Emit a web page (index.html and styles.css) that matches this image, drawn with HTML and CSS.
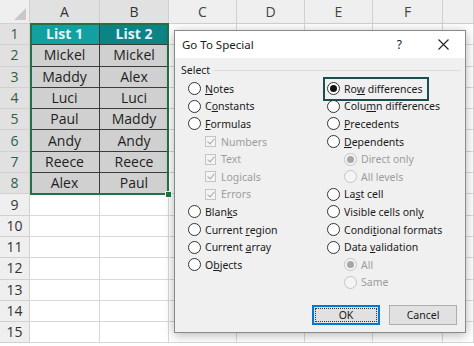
FILE: index.html
```html
<!DOCTYPE html>
<html lang="en">
<head>
  <meta charset="UTF-8" />
  <title>Go To Special</title>
  <link rel="stylesheet" href="styles.css">
</head>
<body>
  <div class="screen">
    <table class="sheet">
      <colgroup>
        <col class="w-hdr"><col class="w-a"><col class="w-b"><col class="w-c"><col class="w-d"><col class="w-e"><col class="w-f"><col class="w-g">
      </colgroup>
      <thead>
        <tr><th class="corner"></th><th class="sel">A</th><th class="sel">B</th><th>C</th><th>D</th><th>E</th><th>F</th><th></th></tr>
      </thead>
      <tbody>
        <tr><th class="sel">1</th><td class="data title-a">List 1</td><td class="data title-b">List 2</td><td></td><td></td><td></td><td></td><td></td></tr>
        <tr><th class="sel">2</th><td class="data">Mickel</td><td class="data">Mickel</td><td></td><td></td><td></td><td></td><td></td></tr>
        <tr><th class="sel">3</th><td class="data">Maddy</td><td class="data">Alex</td><td></td><td></td><td></td><td></td><td></td></tr>
        <tr><th class="sel">4</th><td class="data">Luci</td><td class="data">Luci</td><td></td><td></td><td></td><td></td><td></td></tr>
        <tr><th class="sel">5</th><td class="data">Paul</td><td class="data">Maddy</td><td></td><td></td><td></td><td></td><td></td></tr>
        <tr><th class="sel">6</th><td class="data">Andy</td><td class="data">Andy</td><td></td><td></td><td></td><td></td><td></td></tr>
        <tr><th class="sel">7</th><td class="data">Reece</td><td class="data">Reece</td><td></td><td></td><td></td><td></td><td></td></tr>
        <tr><th class="sel">8</th><td class="data">Alex</td><td class="data">Paul</td><td></td><td></td><td></td><td></td><td></td></tr>
        <tr><th>9</th><td></td><td></td><td></td><td></td><td></td><td></td><td></td></tr>
        <tr><th>10</th><td></td><td></td><td></td><td></td><td></td><td></td><td></td></tr>
        <tr><th>11</th><td></td><td></td><td></td><td></td><td></td><td></td><td></td></tr>
        <tr><th>12</th><td></td><td></td><td></td><td></td><td></td><td></td><td></td></tr>
        <tr><th>13</th><td></td><td></td><td></td><td></td><td></td><td></td><td></td></tr>
        <tr><th>14</th><td></td><td></td><td></td><td></td><td></td><td></td><td></td></tr>
        <tr><th>15</th><td></td><td></td><td></td><td></td><td></td><td></td><td></td></tr>
      </tbody>
    </table>

    <!-- selected range A1:B8 -->
    <div class="selection"><span class="handle"></span></div>

    <div class="dialog">
      <div class="titlebar">
        <span class="title">Go To Special</span>
        <span class="help">?</span>
        <svg class="close" width="11" height="11" viewBox="0 0 11 11"><path d="M0.5 0.5 L10.5 10.5 M10.5 0.5 L0.5 10.5" stroke="#222" stroke-width="1.1" fill="none"/></svg>
      </div>

      <div class="group-head"><span>Select</span><i class="line"></i></div>

      <div class="options">
        <div class="col">
          <label class="opt"><span class="radio"></span><span><u>N</u>otes</span></label>
          <label class="opt"><span class="radio"></span><span>C<u>o</u>nstants</span></label>
          <label class="opt"><span class="radio"></span><span><u>F</u>ormulas</span></label>
          <label class="opt sub off"><span class="check"></span><span>Numbers</span></label>
          <label class="opt sub off"><span class="check"></span><span>Text</span></label>
          <label class="opt sub off"><span class="check"></span><span>Logicals</span></label>
          <label class="opt sub off"><span class="check"></span><span>Errors</span></label>
          <label class="opt"><span class="radio"></span><span>Blan<u>k</u>s</span></label>
          <label class="opt"><span class="radio"></span><span>Current <u>r</u>egion</span></label>
          <label class="opt"><span class="radio"></span><span>Current <u>a</u>rray</span></label>
          <label class="opt"><span class="radio"></span><span>O<u>b</u>jects</span></label>
        </div>
        <div class="col">
          <label class="opt marked"><span class="radio on"></span><span>Ro<u>w</u> differences</span></label>
          <label class="opt"><span class="radio"></span><span>Colu<u>m</u>n differences</span></label>
          <label class="opt"><span class="radio"></span><span><u>P</u>recedents</span></label>
          <label class="opt"><span class="radio"></span><span><u>D</u>ependents</span></label>
          <label class="opt sub off"><span class="radio on"></span><span>Direct only</span></label>
          <label class="opt sub off"><span class="radio"></span><span>All levels</span></label>
          <label class="opt"><span class="radio"></span><span>La<u>s</u>t cell</span></label>
          <label class="opt"><span class="radio"></span><span>Visible cells onl<u>y</u></span></label>
          <label class="opt"><span class="radio"></span><span>Condi<u>t</u>ional formats</span></label>
          <label class="opt"><span class="radio"></span><span>Data <u>v</u>alidation</span></label>
          <label class="opt sub off"><span class="radio on"></span><span>All</span></label>
          <label class="opt sub off"><span class="radio"></span><span>Same</span></label>
        </div>
      </div>

      <div class="buttons">
        <button class="btn default"><span>OK</span></button>
        <button class="btn">Cancel</button>
      </div>
    </div>
  </div>
</body>
</html>
```

FILE: styles.css
```css
body { margin: 0; background: #fff; font-family: 'Open Sans', sans-serif; }
.screen { position: relative; width: 474px; height: 346px; overflow: hidden; }

/* spreadsheet */
.sheet { table-layout: fixed; width: 474px; border-collapse: separate; border-spacing: 0; font-size: 14px; color: #1e1e1e; }
.w-hdr { width: 30px; } .w-a { width: 70px; } .w-b { width: 69px; } .w-c { width: 68px; }
.w-d { width: 68px; } .w-e { width: 68px; } .w-f { width: 70px; } .w-g { width: 31px; }
.sheet th, .sheet td { padding: 0; height: 20.3px; border-right: 1px solid #d8d8d8; border-bottom: 1px solid #d8d8d8; text-align: center; line-height: 20px; box-sizing: content-box; overflow: hidden; white-space: nowrap; }
.sheet th { background: #efefef; font-weight: normal; color: #333; border-color: #d0d0d0; }
.sheet thead th { height: 23px; line-height: 23px; color: #444; }
.sheet th.sel { background: #e1e1e1; color: #2e5d4b; }
.sheet thead th.sel { color: #333; }
.corner { position: relative; }
.corner::after { content: ''; position: absolute; right: 3px; bottom: 3px; border-style: solid; border-width: 0 0 12px 12px; border-color: transparent transparent #c9c9c9 transparent; }
.sheet td.data { background: #d0d0d0; border-right-color: #3b3b3b; border-bottom-color: #3b3b3b; }
.sheet td.title-a { background: #12a0a0; color: #e4f4f4; font-weight: bold; }
.sheet td.title-b { background: #0c8385; color: #e4f4f4; font-weight: bold; }

.selection { position: absolute; left: 30px; top: 23px; width: 135px; height: 168px; border: 2px solid #217346; }
.handle { position: absolute; right: -5px; bottom: -5px; width: 5px; height: 5px; background: #217346; border: 1px solid #fff; }

/* dialog */
.dialog { position: absolute; left: 174px; top: 30px; width: 292px; height: 303px; box-sizing: border-box; border: 1px solid #8a8a8a; background: #f0f0f0; box-shadow: 0 2px 10px rgba(0,0,0,0.3); display: flex; flex-direction: column; font-family: 'Noto Sans', sans-serif; font-size: 10.5px; color: #1a1a1a; }
.titlebar { height: 27px; background: #fff; display: flex; align-items: center; padding: 0 16px 0 7px; font-size: 11.5px; }
.title { flex: 1; }
.help { font-size: 12px; margin-right: 36px; }
.group-head { height: 16px; margin-top: 4px; display: flex; align-items: center; padding-left: 6px; padding-right: 4px; }
.group-head .line { flex: 1; height: 1px; background: #dcdcdc; margin-left: 4px; }
.options { display: grid; grid-template-columns: 139px 1fr; padding: 2px 0 0 13px; }
.col { display: grid; grid-auto-rows: 17.6px; justify-items: start; }
.opt { display: flex; align-items: center; gap: 4px; white-space: nowrap; }
.opt u { text-decoration-thickness: 1px; text-underline-offset: 1px; }
.opt.sub { padding-left: 17px; }
.opt.off { color: #9d9d9d; }
.radio { width: 13px; height: 13px; box-sizing: border-box; border: 1px solid #333; border-radius: 50%; background: #fff; display: flex; align-items: center; justify-content: center; flex: none; }
.radio.on::after { content: ''; width: 7px; height: 7px; border-radius: 50%; background: #111; }
.off .radio { border-color: #c4c4c4; background: #f4f4f4; }
.off .radio.on::after { background: #a6a6a6; }
.check { width: 11px; height: 11px; box-sizing: border-box; border: 1px solid #c4c4c4; background: #f4f4f4; position: relative; flex: none; margin-right: 1px; }
.check::after { content: ''; position: absolute; left: 3px; top: 0px; width: 3px; height: 6px; border: solid #a8a8a8; border-width: 0 1px 1px 0; transform: rotate(40deg); }
.marked { position: relative; }
.marked::after { content: ''; position: absolute; left: -4px; right: -6px; top: -3px; bottom: -3px; border: 2.5px solid #1c4d4f; }
.buttons { margin-top: auto; display: flex; justify-content: flex-end; gap: 9px; padding: 0 8px 7px 0; }
.btn { width: 68px; height: 20px; box-sizing: border-box; border: 1px solid #adadad; background: #e1e1e1; font-family: 'Noto Sans', sans-serif; font-size: 10.5px; color: #1a1a1a; padding: 0; }
.btn.default { border: 2px solid #0078d7; padding: 1px; }
.btn.default span { display: flex; align-items: center; justify-content: center; height: 100%; border: 1px dotted #333; box-sizing: border-box; }
```
